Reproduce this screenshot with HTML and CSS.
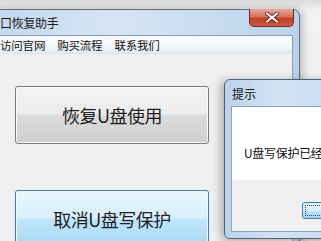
FILE: index.html
```html
<!DOCTYPE html>
<html lang="zh-CN">
<head>
<meta charset="utf-8">
<link rel="stylesheet" href="styles.css">
</head>
<body>
<div class="desk">
  <div class="win">
    <div class="titlebar"><span class="title">口恢复助手</span></div>
    <div class="close">
      <svg width="14" height="11" viewBox="0 0 14 11"><path d="M2 1.5 L12 9.5 M12 1.5 L2 9.5" stroke="#6a2418" stroke-width="4" stroke-linecap="round"/><path d="M2 1.5 L12 9.5 M12 1.5 L2 9.5" stroke="#ffffff" stroke-width="2.2" stroke-linecap="round"/></svg>
    </div>
    <div class="client">
      <div class="menubar">
        <span class="menu">访问官网</span>
        <span class="menu">购买流程</span>
        <span class="menu">联系我们</span>
      </div>
      <div class="content">
        <div class="btn btn-gray">恢复U盘使用</div>
        <div class="btn btn-blue">取消U盘写保护</div>
      </div>
    </div>
  </div>
  <div class="dlg">
    <div class="dlg-title">提示</div>
    <div class="dlg-panel">
      <div class="dlg-msg">U盘写保护已经生效</div>
      <div class="dlg-foot"><div class="dlg-btn"><div class="focus"></div></div></div>
    </div>
  </div>
</div>
</body>
</html>
```
FILE: styles.css
```css
html, body {
  margin: 0;
  padding: 0;
}
body {
  width: 321px;
  height: 241px;
  overflow: hidden;
  font-family: "Noto Sans CJK SC", "Noto Sans", sans-serif;
  background: #eeeeee;
}
.desk {
  position: relative;
  width: 321px;
  height: 241px;
  overflow: hidden;
  background: linear-gradient(#dcdcdc, #f2f2f2 10px, #eeeeee);
}
.win {
  position: absolute;
  left: -8px;
  top: 9px;
  width: 308px;
  height: 250px;
  border: 1px solid #5b6e83;
  border-radius: 7px 7px 0 0;
  background: linear-gradient(90deg, #c3d8ee, #d6e5f5 40%, #c9dcf0 70%, #bcd2ea);
  padding: 0 6px;
  box-sizing: border-box;
  display: flex;
  flex-direction: column;
  box-shadow: 2px 0 10px rgba(0,0,0,0.25);
}
.titlebar {
  height: 25px;
  display: flex;
  align-items: center;
  padding-left: 1px;
}
.title {
  font-size: 12px;
  color: #1a1a1a;
  letter-spacing: -0.3px;
}
.close {
  position: absolute;
  right: 5px;
  top: -1px;
  width: 45px;
  height: 18px;
  border: 1px solid #6b2a22;
  border-top: none;
  border-radius: 0 0 5px 5px;
  box-sizing: border-box;
  background: linear-gradient(#e9a99b, #d5725f 45%, #c2402a 55%, #cf5a3e);
  display: flex;
  align-items: center;
  justify-content: center;
}
.client {
  flex: 1;
  display: flex;
  flex-direction: column;
  background: #f0f0f0;
  border: 1px solid #8c9db1;
  border-bottom: none;
}
.menubar {
  height: 17px;
  display: flex;
  align-items: center;
  padding-left: 0;
  background: linear-gradient(#fbfcfe, #f3f6fb 60%, #e3eaf3);
  border-bottom: 1px solid #dde3ea;
}
.menu {
  font-size: 11.5px;
  color: #111;
  margin-right: 12px;
  letter-spacing: -0.2px;
}
.menu:first-child {
  margin-left: 0;
}
.content {
  padding: 32px 0 0 15px;
  display: flex;
  flex-direction: column;
  gap: 46px;
}
.btn {
  width: 194px;
  height: 58px;
  box-sizing: border-box;
  border-radius: 3px;
  display: flex;
  align-items: center;
  justify-content: center;
  font-size: 18px;
  color: #1e1e1e;
  letter-spacing: -0.5px;
}
.btn-gray {
  border: 1px solid #777b80;
  background: linear-gradient(#f3f3f3, #ececec 48%, #dcdcdc 52%, #cfcfcf);
  box-shadow: inset 0 0 0 1px #fcfcfc;
}
.btn-blue {
  border: 1px solid #3c7fb1;
  background: linear-gradient(#e9f6fd, #d8effc 48%, #bde5fc 52%, #a9daf5);
  box-shadow: inset 0 0 0 1px #f4fbff;
}
.dlg {
  position: absolute;
  left: 224px;
  top: 79px;
  width: 130px;
  height: 160px;
  box-sizing: border-box;
  border: 1px solid #4f6176;
  border-radius: 6px;
  background: linear-gradient(90deg, #bcd3eb, #d3e3f4 40%, #c7dbef);
  padding: 0 6px 6px 6px;
  display: flex;
  flex-direction: column;
  box-shadow: -3px 2px 10px rgba(0,0,0,0.3);
}
.dlg-title {
  height: 26px;
  display: flex;
  align-items: center;
  padding-left: 1px;
  font-size: 12px;
  color: #111;
}
.dlg-panel {
  flex: 1;
  display: flex;
  flex-direction: column;
  border: 1px solid #8ea1b6;
}
.dlg-msg {
  height: 73px;
  box-sizing: border-box;
  background: #ffffff;
  padding: 38px 0 0 12px;
  font-size: 12px;
  line-height: 16px;
  color: #111;
  white-space: nowrap;
  letter-spacing: -0.3px;
}
.dlg-foot {
  flex: 1;
  background: #f0f0f0;
  padding: 22px 0 0 70px;
}
.dlg-btn {
  width: 75px;
  height: 17px;
  box-sizing: border-box;
  border: 1px solid #3c7fb1;
  border-radius: 3px;
  background: linear-gradient(#eaf6fd, #d9f0fc 50%, #bee6fd 51%, #a7d9f5);
  padding: 2px;
}
.focus {
  height: 100%;
  box-sizing: border-box;
  border: 1px dotted #2a4a66;
}
```
